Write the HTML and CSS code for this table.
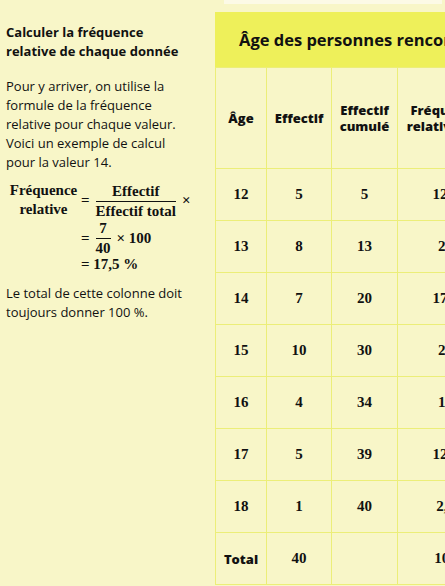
FILE: index.html
```html
<!DOCTYPE html>
<html lang="fr">
<head>
  <meta charset="UTF-8">
  <title>Fréquence relative</title>
  <link rel="stylesheet" href="styles.css">
</head>
<body>
  <div class="aside">
    <h3>Calculer la fréquence relative de chaque donnée</h3>
    <p>Pour y arriver, on utilise la formule de la fréquence relative pour chaque valeur. Voici un exemple de calcul pour la valeur 14.</p>
    <div class="formula">
      <div class="label">Fréquence<br>relative</div>
      <div class="expr">
        <span class="op">=</span>
        <span class="frac"><span class="num">Effectif</span><span class="den">Effectif total</span></span>
        <span class="op">×</span>
      </div>
      <div></div>
      <div class="expr">
        <span class="op">=</span>
        <span class="frac"><span class="num">7</span><span class="den">40</span></span>
        <span class="op">× 100</span>
      </div>
      <div></div>
      <div class="expr"><span class="op">= 17,5 %</span></div>
    </div>
    <p>Le total de cette colonne doit toujours donner 100 %.</p>
  </div>
  <div class="main">
    <div class="strip"></div>
    <div class="table-wrap">
      <div class="caption">Âge des personnes rencontrées</div>
      <table class="data">
        <colgroup><col style="width:51px"><col style="width:65px"><col style="width:66px"><col style="width:96px"></colgroup>
        <tr class="head"><th>Âge</th><th>Effectif</th><th>Effectif cumulé</th><th>Fréquence relative (%)</th></tr>
        <tr><td>12</td><td>5</td><td>5</td><td>12,5</td></tr>
        <tr><td>13</td><td>8</td><td>13</td><td>20</td></tr>
        <tr><td>14</td><td>7</td><td>20</td><td>17,5</td></tr>
        <tr><td>15</td><td>10</td><td>30</td><td>25</td></tr>
        <tr><td>16</td><td>4</td><td>34</td><td>10</td></tr>
        <tr><td>17</td><td>5</td><td>39</td><td>12,5</td></tr>
        <tr><td>18</td><td>1</td><td>40</td><td>2,5</td></tr>
        <tr class="total"><th>Total</th><td>40</td><td></td><td>100</td></tr>
      </table>
    </div>
  </div>
</body>
</html>
```

FILE: styles.css
```css
* { box-sizing: border-box; margin: 0; padding: 0; }
body {
  background: #f8f6c8;
  font-family: "Open Sans", Lato, sans-serif;
  color: #111;
  display: flex;
  height: 100vh;
  overflow: hidden;
}

/* Left explanation column */
.aside {
  width: 215px;
  flex-shrink: 0;
  padding: 23px 23px 0 6px;
  font-size: 13px;
  line-height: 19px;
}
.aside h3 { font-size: 13px; font-weight: 700; margin-bottom: 16px; }
.aside p { margin-bottom: 8px; }

/* Math formula */
.formula {
  display: grid;
  grid-template-columns: 75px auto;
  align-items: center;
  font-family: "Liberation Serif", serif;
  font-weight: 700;
  font-size: 15px;
  line-height: 16px;
  margin: 9px 0 12px 0;
}
.formula .label { text-align: center; line-height: 19px; }
.expr { display: flex; align-items: center; gap: 6px; }
.expr .op { font-weight: 700; }
.frac { display: inline-flex; flex-direction: column; align-items: center; padding-top: 1px; }
.frac .num { border-bottom: 1px solid #111; padding: 0 2px 2px; width: 100%; text-align: center; }
.frac .den { padding-top: 1px; }

/* Right table column */
.main {
  flex: 1;
  min-width: 0;
  overflow: hidden;
}
.strip {
  height: 4px;
  margin: 0 3px 0 9px;
  background: #fcfae6;
}
.table-wrap { margin-top: 8px; width: 340px; }
.caption {
  background: #eef05a;
  height: 55px;
  line-height: 55px;
  padding-left: 24px;
  font-size: 16.5px;
  font-weight: 700;
  white-space: nowrap;
  overflow: hidden;
}
.data {
  border-collapse: collapse;
  table-layout: fixed;
  width: 278px;
}
.data th, .data td {
  border: 1px solid #ecee78;
  text-align: center;
  height: 52px;
}
.data tr.head th {
  height: 101px;
  font-size: 13px;
  line-height: 16px;
  font-weight: 800;
  padding: 0 3px;
}
.data td {
  font-family: "Liberation Serif", serif;
  font-weight: 700;
  font-size: 15px;
}
.data tr.total th { font-size: 13px; font-weight: 800; }
```
